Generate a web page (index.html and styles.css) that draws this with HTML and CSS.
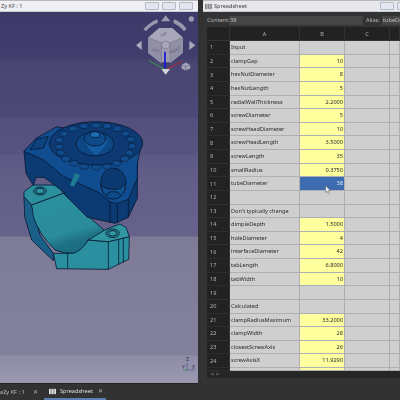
FILE: index.html
```html
<!DOCTYPE html>
<html>
<head lang="en">
    <meta charset="UTF-8">
    <title>Spreadsheet</title>
    <link rel="stylesheet" href="styles.css">
</head>
<body>
    <div class="panes">
        <div class="pane-left">
            <div class="titlebar">
                <span class="title-left">Zy KF : 1</span>
                <div class="winbtns"><i></i><i></i><i></i></div>
            </div>
            <div class="viewport">
                <svg class="scene" viewBox="0 12 198 370">
                    <defs>
                        <linearGradient id="saddle" x1="0.35" y1="0.3" x2="0.6" y2="1">
                            <stop offset="0" stop-color="#2b8e9c"/>
                            <stop offset=".5" stop-color="#2a8c9b"/>
                            <stop offset=".72" stop-color="#1f7286"/>
                            <stop offset="1" stop-color="#1a6a80"/>
                        </linearGradient>
                    </defs>
                    <!-- nav cube, coords are 3x page -->
                    <g transform="scale(.33333)">
                        <path d="M430 88Q448 68 472 58L474 68Q452 76 438 94ZM522 58Q544 66 560 86L552 94Q540 78 520 68ZM483 64L497 46L511 64Z" fill="#9a98ae"/>
                        <circle cx="574" cy="57" r="8" fill="#9a98ae"/>
                        <path d="M425 122V150L408 136ZM568 122V150L586 136Z" fill="#aaa8bc"/>
                        <path d="M444 113L478 84H516L549 113V158L512 187H480L444 158Z" fill="#9f9db2"/>
                        <path d="M478 84H516L549 113L510 128H484L444 113Z" fill="#a8a6b8"/>
                        <path d="M444 113L484 128V190L444 158ZM549 113L510 128V190L549 158Z" fill="#918fa6"/>
                        <path d="M444 113L484 128M549 113L510 128M484 128V186M510 128V186" stroke="#77758c" stroke-width="2" fill="none"/>
                        <circle cx="497" cy="135" r="12" fill="#a8a6b8" stroke="#77758c" stroke-width="2"/>
                        <text x="493" y="107" class="cube-label" transform="rotate(-30 493 107)">TOP</text>
                        <text x="466" y="155" class="cube-label" transform="rotate(20 466 155)">LEFT</text>
                        <text x="526" y="155" class="cube-label" transform="rotate(-24 526 155)">FRONT</text>
                        <path d="M484 207H510L497 224Z" fill="#d4d3dc"/>
                        <path d="M447 182L492 207" stroke="#38c838" stroke-width="3" stroke-dasharray="4 2" fill="none"/>
                        <path d="M503 206L547 183" stroke="#9a3048" stroke-width="4" fill="none"/>
                        <path d="M495 155V205" stroke="#1414d8" stroke-width="5" fill="none"/>
                        <path d="M544 194L557 187L571 194V206L557 212L544 206Z" fill="#a6a4b8" stroke="#4a4870" stroke-width="1.5"/>
                        <path d="M544 194L557 200L571 194M557 200V212" stroke="#4a4870" stroke-width="1.5" fill="none"/>
                    </g>
                    <!-- model, coords are 3x page from y=120 -->
                    <g transform="translate(0 120) scale(.33333)" stroke="#081630" stroke-width="2.4" stroke-linejoin="round">
                        <!-- lower clamp -->
                        <path d="M72 230L74 290L95 360L160 422L160 400L120 345L95 255Z" fill="#1a5f88"/>
                        <path d="M72 215L100 195L172 195L190 220L95 255L72 230Z" fill="#2c8f9e"/>
                        <path d="M95 255L190 220L260 285L318 335L265 360Q245 395 220 400Q190 402 165 390Q118 345 100 290Z" fill="url(#saddle)"/>
                        <path d="M160 400L220 400Q245 392 265 360L325 365L388 350L386 418L325 448L170 446Z" fill="#2a8f9e"/>
                        <path d="M265 360L318 328L360 312L378 322L388 350L325 365Z" fill="#2f96a2"/>
                        <path d="M203 401V446M325 365V448M356 358V434M370 355V428" fill="none"/>
                        <ellipse cx="120" cy="213" rx="19" ry="12" fill="#237c8c"/>
                        <ellipse cx="120" cy="213" rx="12" ry="8" fill="#3398a4"/>
                        <ellipse cx="338" cy="340" rx="20" ry="13" fill="#237c8c"/>
                        <ellipse cx="338" cy="340" rx="12" ry="8" fill="#3398a4"/>
                        <!-- upper clamp -->
                        <path d="M72 94L78 160L100 196L108 172L132 172L190 215L205 235L262 292L345 310L385 292L412 235V130L380 90L110 54Z" fill="#0c3a72"/>
                        <path d="M72 94L110 54L170 20L425 70L412 130L412 175L385 238L352 250L330 246L300 219L190 169L130 119Z" fill="#0f4d90"/>
                        <path d="M330 246V308M352 250V310M385 238V292" fill="none"/>
                        <path d="M90 89L110 59L145 49L130 84Z" fill="#0d447f"/>
                        <path d="M225 159L240 165L222 200L210 196Z" fill="#1d7a90" stroke="none"/>
                        <ellipse cx="340" cy="189" rx="38" ry="45" fill="#0c3a70"/>
                        <path d="M302 195Q312 238 342 236Q378 232 377 190Q362 210 340 208Q316 208 302 195Z" fill="#11508f"/>
                        <ellipse cx="340" cy="226" rx="21" ry="11" fill="#0e4a88"/>
                        <ellipse cx="288" cy="70" rx="140" ry="65" fill="#0d3a72"/>
                        <ellipse cx="285" cy="72" rx="57" ry="36" fill="#0e4785"/>
                        <path d="M252 62Q288 50 324 62Q308 92 288 106Q268 92 252 62Z" fill="#155ba2" stroke="none"/>
                        <ellipse cx="285" cy="56" rx="32" ry="22" fill="#10498a"/>
                        <ellipse cx="285" cy="44" rx="14" ry="9" fill="#1b6cb0"/>
                        <g fill="#114c8c" stroke-width="1.6">
                            <ellipse cx="288" cy="16" rx="13" ry="8"/><ellipse cx="252" cy="18" rx="13" ry="8"/><ellipse cx="322" cy="18" rx="13" ry="8"/>
                            <ellipse cx="220" cy="26" rx="13" ry="8"/><ellipse cx="352" cy="26" rx="13" ry="8"/><ellipse cx="192" cy="41" rx="12" ry="8"/>
                            <ellipse cx="376" cy="41" rx="12" ry="8"/><ellipse cx="178" cy="60" rx="12" ry="8"/><ellipse cx="393" cy="58" rx="12" ry="8"/>
                            <ellipse cx="178" cy="80" rx="12" ry="8"/><ellipse cx="396" cy="78" rx="12" ry="8"/><ellipse cx="182" cy="98" rx="12" ry="8"/>
                            <ellipse cx="388" cy="98" rx="12" ry="8"/><ellipse cx="198" cy="116" rx="13" ry="8"/><ellipse cx="374" cy="116" rx="13" ry="8"/>
                            <ellipse cx="222" cy="130" rx="13" ry="8"/><ellipse cx="350" cy="130" rx="13" ry="8"/><ellipse cx="252" cy="140" rx="13" ry="8"/>
                            <ellipse cx="322" cy="140" rx="13" ry="8"/><ellipse cx="288" cy="142" rx="13" ry="8"/>
                        </g>
                    </g>
                    <!-- small axis, bottom right -->
                    <g class="mini-axis">
                        <path d="M187 363V370H194" stroke="#5a6a9a" fill="none"/>
                        <path d="M187 370L183 371" stroke="#48a060" fill="none"/>
                        <text x="186" y="361">Z</text>
                        <text x="182" y="369">Y</text>
                        <text x="192" y="369">X</text>
                    </g>
                </svg>
            </div>
        </div>
        <div class="pane-right">
            <div class="titlebar titlebar-sheet">
                <svg class="sheet-icon" viewBox="0 0 8 8"><path d="M0 1H8V7H0Z" fill="#8a8a8a"/><path d="M2.5 1V7M5.5 1V7" stroke="#eee" stroke-width=".7"/></svg>
                <span>Spreadsheet</span>
                <div class="winbtns"><i></i><i></i></div>
            </div>
            <div class="sheet">
                <div class="content-row">
                    <span class="label-content">Content:</span>
                    <div class="field field-main">38</div>
                    <span class="label-alias">Alias:</span>
                    <div class="field field-alias">tubeDia</div>
                </div>
                <div class="grid" id="grid"></div>
                <div class="sheet-tabs">&lt; &gt;</div>
                <svg class="cursor" viewBox="0 0 6 9"><path d="M.5 .5V7.5L2 6L3.2 8.5L4.4 8L3.3 5.6H5.4Z" fill="#f4f4f4" stroke="#333" stroke-width=".4"/></svg>
            </div>
        </div>
    </div>
    <div class="tabbar">
        <div class="tab">aZy KF : 1</div>
        <span class="tab-x">✕</span>
        <div class="tab-active">
            <svg class="tab-icon" viewBox="0 0 8 8"><path d="M0 1H8V7H0Z" fill="#ddd"/><path d="M2.5 1V7M5.5 1V7" stroke="#444" stroke-width=".7"/></svg>
            <span class="tab-name">Spreadsheet</span>
            <span class="tab-x">✕</span>
        </div>
    </div>
    <script>
        var rows=[
            ["Input",""],["clampGap","10"],["hexNutDiameter","8"],["hexNutLength","5"],
            ["radialWallThickness","2.2000"],["screwDiameter","5"],["screwHeadDiameter","10"],
            ["screwHeadLength","3.5000"],["screwLength","35"],["smallRadius","0.3750"],
            ["tubeDiameter","38"],["",""],["Don't typically change",""],["dimpleDepth","1.5000"],
            ["holeDiameter","4"],["interfaceDiameter","42"],["tabLength","6.8000"],["tabWidth","10"],
            ["",""],["Calculated",""],["clampRadiusMaximum","33.2000"],["clampWidth","28"],
            ["closestScrewAxis","26"],["screwAxisX","11.9290"]
        ];
        var html='<div class="corner"></div><div class="colhead">A</div><div class="colhead">B</div><div class="colhead">C</div><div class="colhead"></div>';
        for(var i=0;i<rows.length;i++){
            var cls="cell num";
            if(rows[i][1]) cls+=" filled";
            if(rows[i][0]=="tubeDiameter") cls="cell num picked";
            html+='<div class="rowhead">'+(i+1)+'</div><div class="cell">'+rows[i][0]+'</div><div class="'+cls+'">'+rows[i][1]+'</div><div class="cell"></div><div class="cell"></div>';
        }
        // row 25 only just shows above the scrollbar
        html+='<div class="rowhead"></div><div class="cell"></div><div class="cell filled"></div><div class="cell"></div><div class="cell"></div>';
        document.getElementById("grid").innerHTML=html;
    </script>
</body>
</html>
```

FILE: styles.css
```css
*{
    margin: 0;
    padding: 0;
    box-sizing: border-box;
}
html,body{
    width: 400px;
    height: 400px;
    overflow: hidden;
}
body{
    background: #323232;
    font-family: "Noto Sans", "Liberation Sans", sans-serif;
    font-size: 5.6px;
    color: #2a2a2a;
    display: flex;
    flex-direction: column;
}
.panes{
    height: 384px;
    display: flex;
    gap: 5px;
    filter: blur(.3px);
}
.pane-left{
    width: 198px;
    display: flex;
    flex-direction: column;
    border-bottom: 1px solid #222;
}
.pane-right{
    flex: 1;
    display: flex;
    flex-direction: column;
    min-width: 0;
}
.titlebar{
    height: 12px;
    flex: none;
    background: #eef0f3;
    display: flex;
    align-items: center;
    color: #444;
    border-top: 1px solid #b8b8b8;
    border-bottom: 1px solid #c8ccd4;
}
.title-left{
    padding-left: 1px;
    flex: 1;
}
.titlebar-sheet{
    padding-left: 2px;
    gap: 2px;
    background: #e6e8ec;
}
.titlebar-sheet span{
    flex: 1;
}
.sheet-icon{
    width: 7px;
    height: 7px;
}
.winbtns{
    display: flex;
    gap: 3px;
    padding-right: 5px;
}
.winbtns i{
    display: block;
    width: 14px;
    height: 8px;
    background: #e2e6ee;
    border: 1px solid #b4bac6;
    border-radius: 1px;
}
.titlebar-sheet .winbtns{
    padding-right: 0;
    margin-right: -11px;
}
.viewport{
    flex: 1;
    position: relative;
    background: linear-gradient(#3d3968 0, #413d6c 46px, #47436f 47px, #4a4674 56px, #4c4877 105px, #534f7e 106px, #575381 142px, #5c5885 143px, #625e88 166px, #66628c 224px, #7d7b96 225px, #83819b 343px, #8f8da7 344px, #9a98ae 370px);
}
.scene{
    position: absolute;
    left: 0;
    top: 0;
    width: 198px;
    height: 370px;
}
.cube-label{
    font-size: 11px;
    fill: #55536a;
    text-anchor: middle;
}
.mini-axis text{
    font-size: 5px;
    fill: #2a2a3c;
}
.sheet{
    flex: 1;
    position: relative;
    background: #333;
    padding: 3px 0 0 4px;
    display: flex;
    flex-direction: column;
    min-height: 0;
}
.content-row{
    height: 10px;
    display: flex;
    align-items: center;
    color: #b8b8b8;
}
.label-content{
    width: 22px;
}
.label-alias{
    width: 19px;
    padding-left: 3px;
}
.field{
    height: 9px;
    line-height: 9px;
    background: #454545;
    color: #c0c0c0;
    padding-left: 1px;
    overflow: hidden;
    white-space: nowrap;
}
.field-main{
    width: 134px;
}
.field-alias{
    flex: 1;
    min-width: 0;
}
.grid{
    margin-top: 2px;
    display: grid;
    grid-template-columns: 23px 70px 45px 45px 1fr;
    grid-template-rows: 14px repeat(24, 13.625px) 3px;
    height: 344px;
}
.corner,.colhead,.rowhead{
    background: #222;
    color: #b4b4b4;
    display: flex;
    align-items: center;
    border-right: 1px solid #333;
    border-bottom: 1px solid #333;
}
.colhead{
    justify-content: center;
}
.rowhead{
    padding-left: 3px;
    border-bottom-color: #2c2c2c;
}
.cell{
    background: #cfcfcf;
    border-right: 1px solid #adadad;
    border-bottom: 1px solid #adb0b6;
    padding: 0 1px;
    line-height: 13px;
    white-space: nowrap;
    overflow: hidden;
}
.num{
    text-align: right;
}
.filled{
    background: #ffff9e;
}
.picked{
    background: #3d6db0;
    color: #dfe6f2;
}
.sheet-tabs{
    height: 7px;
    line-height: 7px;
    background: #262626;
    color: #bbb;
    padding-left: 4px;
}
.cursor{
    position: absolute;
    left: 122px;
    top: 173px;
    width: 6px;
    height: 9px;
}
.tabbar{
    flex: 1;
    display: flex;
    align-items: center;
    color: #bdbdbd;
    filter: blur(.3px);
}
.tab{
    width: 33px;
    white-space: nowrap;
}
.tab-x{
    color: #b0b0b0;
    font-size: 6px;
}
.tab-active{
    width: 62px;
    margin-left: 6px;
    height: 15px;
    display: flex;
    align-items: center;
    padding: 0 3px 0 5px;
    color: #dedede;
    border-bottom: 2px solid #5b7fb5;
}
.tab-name{
    flex: 1;
    padding-left: 4px;
}
.tab-icon{
    width: 7px;
    height: 7px;
}
```
